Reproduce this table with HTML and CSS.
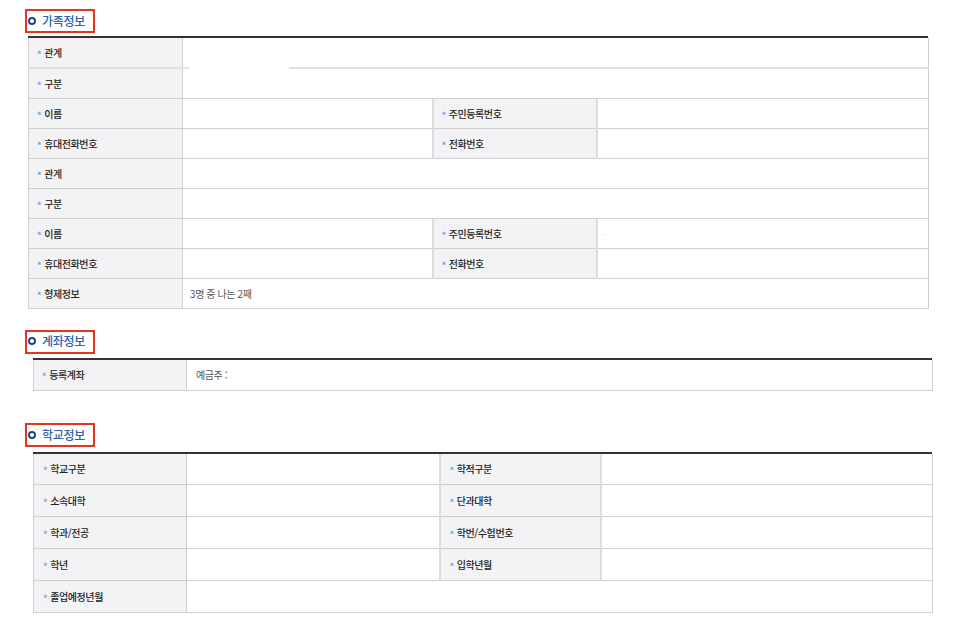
FILE: index.html
```html
<!DOCTYPE html>
<html lang="ko">
<head>
<meta charset="utf-8">
<link rel="stylesheet" href="styles.css">
</head>
<body>
<div class="page">
  <section class="sec sec-family">
    <h2 class="title"><span class="ring"></span><span class="ttext">가족정보</span></h2>
    <div class="wrap wrap-family">
    <table class="tbl tbl-family">
      <colgroup><col class="c1"><col class="c2"><col class="c3"><col class="c4"></colgroup>
      <tr class="first"><th><i>*</i>관계</th><td colspan="3" class="cover-cell"><span class="cover"></span></td></tr>
      <tr><th><i>*</i>구분</th><td colspan="3"></td></tr>
      <tr><th><i>*</i>이름</th><td></td><th class="th2"><i>*</i>주민등록번호</th><td></td></tr>
      <tr><th><i>*</i>휴대전화번호</th><td></td><th class="th2"><i>*</i>전화번호</th><td></td></tr>
      <tr><th><i>*</i>관계</th><td colspan="3"></td></tr>
      <tr><th><i>*</i>구분</th><td colspan="3"></td></tr>
      <tr><th><i>*</i>이름</th><td></td><th class="th2"><i>*</i>주민등록번호</th><td><span class="speck">·</span></td></tr>
      <tr><th><i>*</i>휴대전화번호</th><td></td><th class="th2"><i>*</i>전화번호</th><td></td></tr>
      <tr><th><i>*</i>형제정보</th><td colspan="3" class="val">3명 중 나는 2째</td></tr>
    </table>
    </div>
  </section>

  <section class="sec sec-account">
    <h2 class="title"><span class="ring"></span><span class="ttext">계좌정보</span></h2>
    <div class="wrap wrap-account">
    <table class="tbl tbl-account">
      <colgroup><col class="d1"><col class="d2"></colgroup>
      <tr class="first"><th><i>*</i>등록계좌</th><td class="val val2">예금주 :</td></tr>
    </table>
    </div>
  </section>

  <section class="sec sec-school">
    <h2 class="title"><span class="ring"></span><span class="ttext">학교정보</span></h2>
    <div class="wrap wrap-school">
    <table class="tbl tbl-school">
      <colgroup><col class="e1"><col class="e2"><col class="e3"><col class="e4"></colgroup>
      <tr class="first"><th><i>*</i>학교구분</th><td></td><th class="th2"><i>*</i>학적구분</th><td></td></tr>
      <tr><th><i>*</i>소속대학</th><td></td><th class="th2"><i>*</i>단과대학</th><td></td></tr>
      <tr><th><i>*</i>학과/전공</th><td></td><th class="th2"><i>*</i>학번/수험번호</th><td></td></tr>
      <tr><th><i>*</i>학년</th><td></td><th class="th2"><i>*</i>입학년월</th><td></td></tr>
      <tr><th><i>*</i>졸업예정년월</th><td colspan="3"></td></tr>
    </table>
    </div>
  </section>
</div>
</body>
</html>
```

FILE: styles.css
```css
* { box-sizing: border-box; }
html, body { margin: 0; padding: 0; background: #fff; }
body {
  font-family: "Noto Sans CJK KR", "Noto Sans", sans-serif;
  color: #333;
}
.page {
  padding: 9px 0 0 25px;
  width: 954px;
}
.sec { display: block; }
.title {
  display: flex;
  align-items: center;
  margin: 0;
  height: 24px;
  width: 70px;
  border: 2px solid #e4351f;
  padding: 0 0 1px 1px;
  font-size: 12px;
  font-weight: 500;
  color: #2b63ae;
  letter-spacing: -0.3px;
  line-height: 1;
}
.ring {
  width: 8px;
  height: 8px;
  border-radius: 50%;
  border: 2.5px solid #1b4985;
  background: #fff;
  margin-right: 6px;
  flex: none;
}
.ttext { display: block; }

.wrap {
  width: 900px;
  border-top: 2px solid #333;
}
.tbl {
  border-collapse: collapse;
  table-layout: fixed;
  width: 100%;
  font-size: 10px;
  letter-spacing: -0.4px;
}
.tbl th, .tbl td {
  border: 1px solid #cfcfcf;
  padding: 0;
  text-align: left;
  vertical-align: middle;
}
.tbl tr.first th, .tbl tr.first td { border-top: 0; }
.tbl th {
  background: #f3f3f6;
  font-weight: 500;
  color: #222;
  padding-left: 8px;
}
.tbl th i {
  font-style: normal;
  font-weight: 700;
  color: #6d9fdc;
  font-size: 9px;
  margin-right: 3px;
  position: relative;
  top: 1px;
}
.tbl .th2 { border-left: 2px solid #dcdcdc; border-right: 2px solid #dcdcdc; }
.val { color: #555; padding-left: 7px !important; }
.val2 { padding-left: 9px !important; }

.wrap-family { margin: 3px 0 0 3px; }
.tbl-family tr { height: 30px; }
.tbl-family tr.first td, .tbl-family tr.first th { border-bottom: 2px solid #e2e2e2; }
.tbl-family .c1 { width: 154px; }
.tbl-family .c2 { width: 250px; }
.tbl-family .c3 { width: 164px; }
.tbl-family .c4 { width: 332px; }
.cover-cell { position: relative; }
.cover {
  position: absolute;
  left: 6px;
  bottom: -2px;
  width: 100px;
  height: 3px;
  background: #fff;
}
.speck { color: #c8c8c8; font-size: 8px; padding-left: 6px; }

.sec-account { margin-top: 21px; }
.wrap-account { margin: 4px 0 0 8px; width: 899px; }
.tbl-account tr { height: 31px; }
.tbl-account .d1 { width: 153px; }
.tbl-account .d2 { width: 746px; }

.sec-school { margin-top: 32px; }
.wrap-school { margin: 5px 0 0 8px; width: 899px; }
.tbl-school tr { height: 32px; }
.tbl-school tr.first { height: 30px; }
.tbl-school .e1 { width: 153px; }
.tbl-school .e2 { width: 253px; }
.tbl-school .e3 { width: 161px; }
.tbl-school .e4 { width: 332px; }
.tbl-school th { padding-left: 9px; }
```
